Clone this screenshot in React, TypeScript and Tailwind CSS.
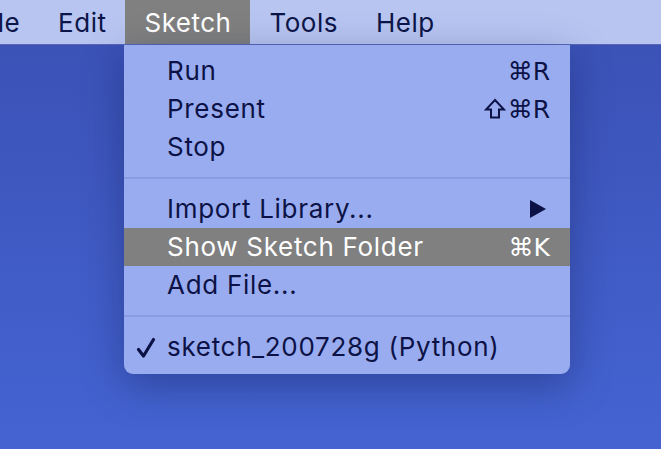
import React from "react";

const font = { fontFamily: "Inter, 'DejaVu Sans', sans-serif" };

function Sep() {
  return (
    <div className="h-[24px] flex items-center">
      <div className="h-[2px] w-full bg-[#8a9de3]" />
    </div>
  );
}

function Shift() {
  return (
    <svg width="22" height="22" viewBox="0 0 22 22" className="mr-[2px] mb-[1px]">
      <path
        d="M11 2 L20 11.5 L15 11.5 L15 19.5 L7 19.5 L7 11.5 L2 11.5 Z"
        fill="none"
        stroke="#0c1245"
        strokeWidth="2"
        strokeLinejoin="miter"
      />
    </svg>
  );
}

function Item({
  label,
  shortcut,
  shift,
  highlight,
  arrow,
  check,
}: {
  label: string;
  shortcut?: string;
  shift?: boolean;
  highlight?: boolean;
  arrow?: boolean;
  check?: boolean;
}) {
  return (
    <div
      className={
        "relative h-[38px] flex items-center pl-[43px] pr-[20px] " +
        (highlight ? "bg-[#808080] text-white" : "text-[#0c1245]")
      }
    >
      {check && (
        <svg
          className="absolute left-[12px] top-[9px]"
          width="20"
          height="22"
          viewBox="0 0 20 22"
        >
          <path
            d="M2.5 12.5 L7.5 19 L17.5 2.5"
            fill="none"
            stroke="#0c1245"
            strokeWidth="3.2"
            strokeLinejoin="round"
            strokeLinecap="round"
          />
        </svg>
      )}
      <span className="flex-1 text-[26px] leading-none tracking-[0.7px]">{label}</span>
      {shift && <Shift />}
      {shortcut && (
        <span className="text-[25px] leading-none" style={{ fontFamily: "'DejaVu Sans', sans-serif" }}>
          {shortcut}
        </span>
      )}
      {arrow && (
        <svg width="18" height="18" viewBox="0 0 18 18" className="mr-[3px]">
          <path d="M1 0 L17 9 L1 18 Z" fill="#0c1245" />
        </svg>
      )}
    </div>
  );
}

export default function App() {
  return (
    <div
      className="relative w-[661px] h-[449px] overflow-hidden bg-gradient-to-b from-[#3a50b4] to-[#4564d2]"
      style={font}
    >
      <div className="h-[45px] bg-[#b8c5f1] border-b border-[#5567b6] flex text-[26px] tracking-[0.5px] text-[#0c1548]">
        <div className="ml-[-44px] px-[19px] flex items-center">File</div>
        <div className="px-[19px] flex items-center">Edit</div>
        <div className="px-[19px] flex items-center bg-[#808080] text-white">Sketch</div>
        <div className="px-[19px] flex items-center">Tools</div>
        <div className="px-[19px] flex items-center">Help</div>
      </div>
      <div className="absolute left-[124px] top-[45px] w-[446px] h-[329px] bg-[#99acf0] rounded-b-[9px] pt-[7px] shadow-[0_12px_40px_rgba(10,20,70,0.35)]">
        <Item label="Run" shortcut="⌘R" />
        <Item label="Present" shortcut="⌘R" shift />
        <Item label="Stop" />
        <Sep />
        <Item label="Import Library..." arrow />
        <Item label="Show Sketch Folder" shortcut="⌘K" highlight />
        <Item label="Add File..." />
        <Sep />
        <Item label="sketch_200728g (Python)" check />
      </div>
    </div>
  );
}
